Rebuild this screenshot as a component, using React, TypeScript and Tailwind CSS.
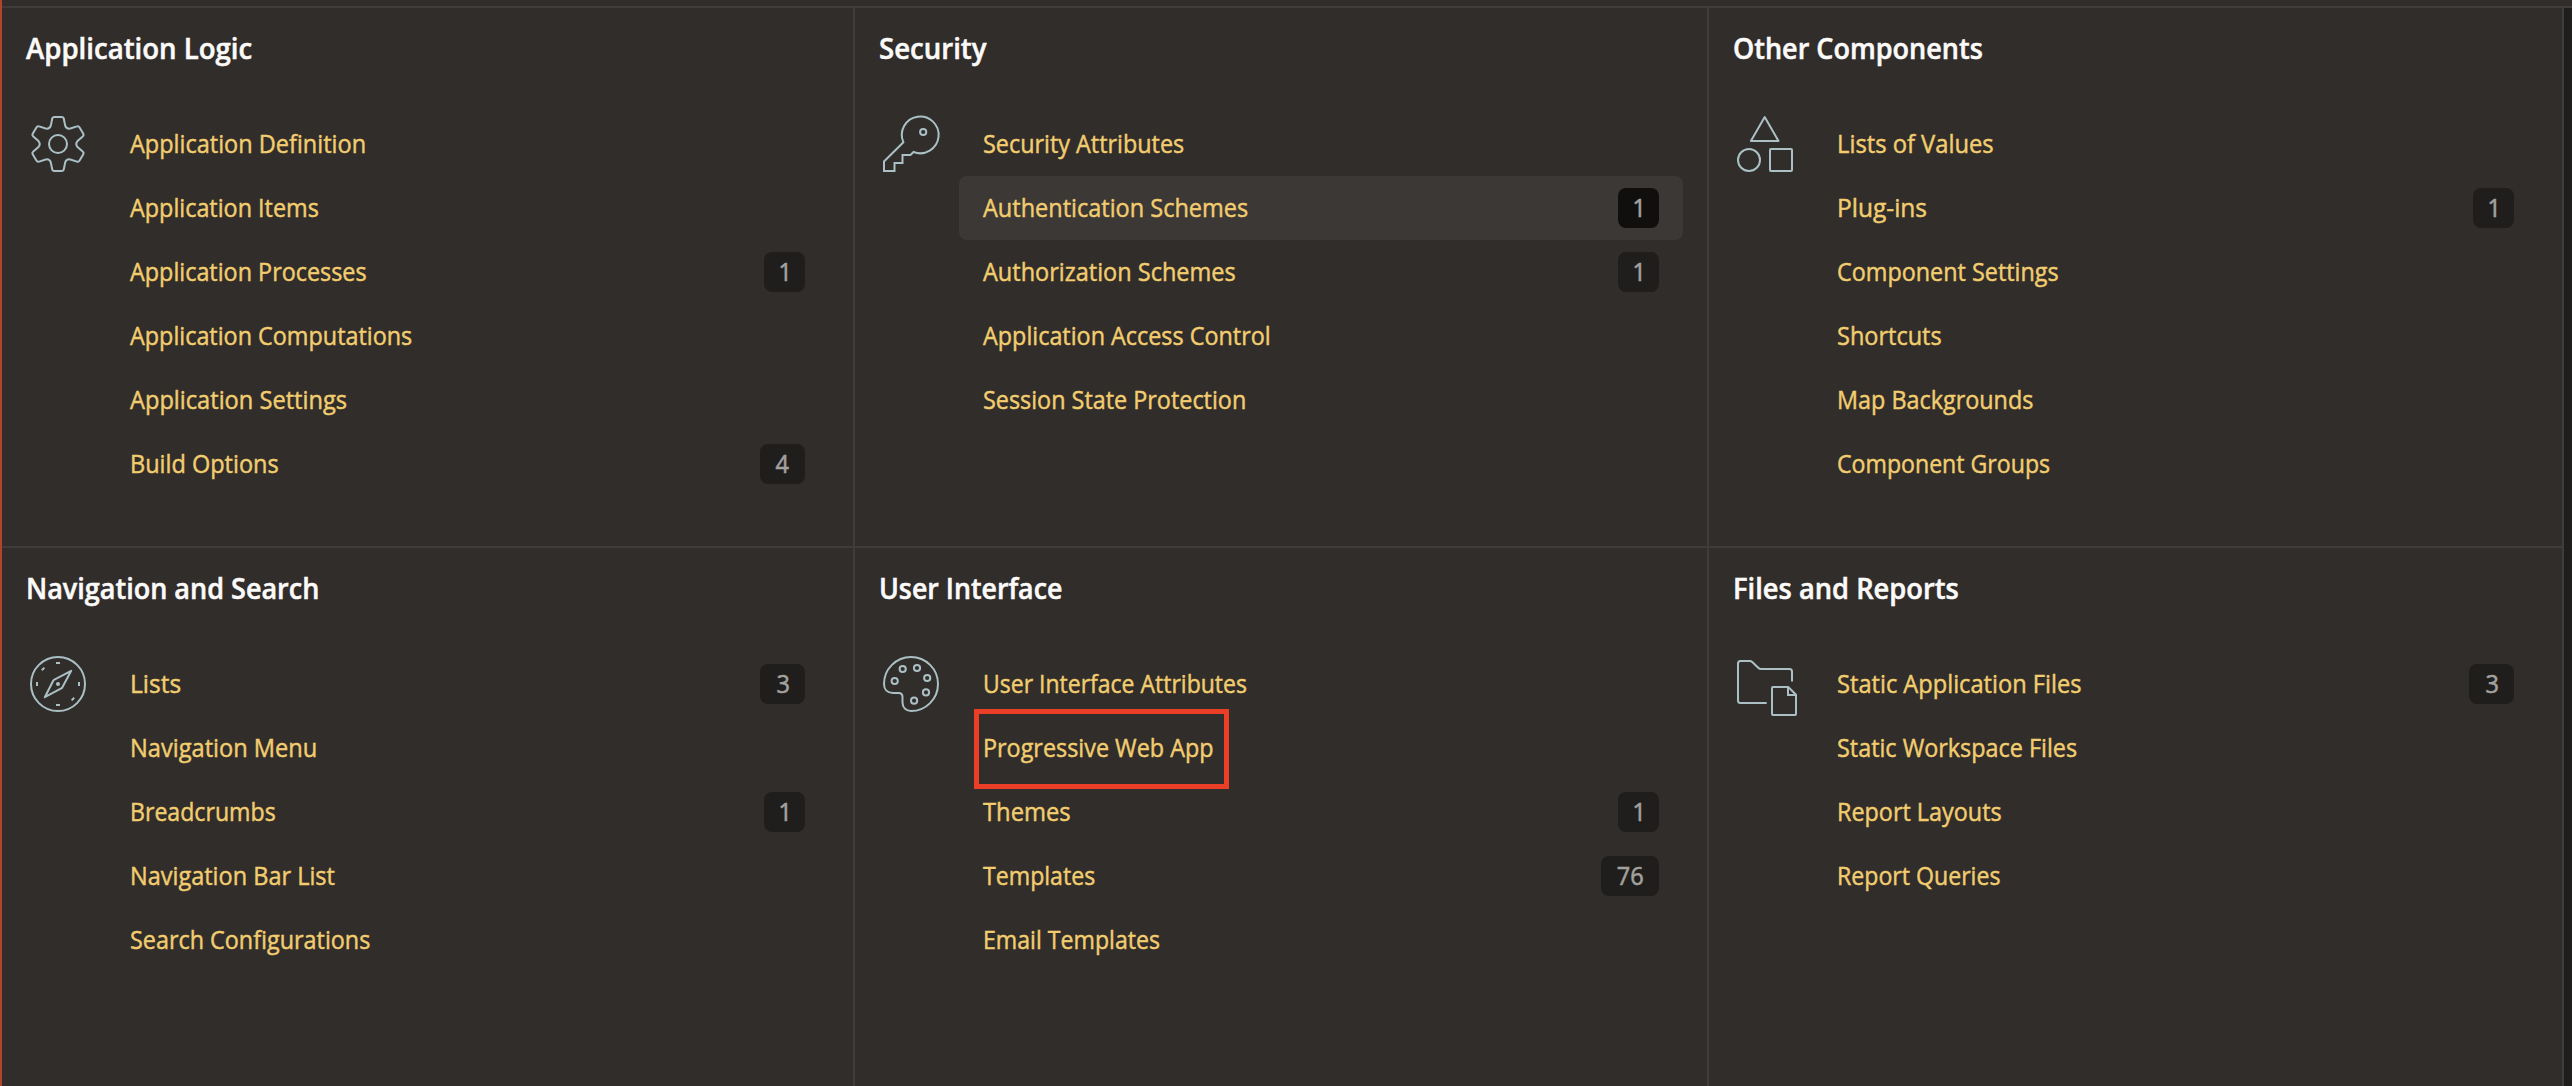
import React from 'react';

type Entry = { label: string; fit: string; count?: number; active?: boolean; marked?: boolean };
type Section = { title: string; fit: string; icon: React.ReactNode; entries: Entry[] };

// Outline of a six-toothed gear: one tooth, repeated every 60 degrees.
function gearPath() {
  const at = (k: number, x: number, y: number) => {
    const a = (k * Math.PI) / 3;
    const px = 32 + x * Math.cos(a) - y * Math.sin(a);
    const py = 32 + x * Math.sin(a) + y * Math.cos(a);
    return `${px.toFixed(2)} ${py.toFixed(2)}`;
  };
  let d = `M${at(0, -7.2, -18.4)}`;
  for (let k = 0; k < 6; k++) {
    d += `L${at(k, -5.8, -25.2)}Q${at(k, -5.5, -27)} ${at(k, -3.6, -27)}`;
    d += `L${at(k, 3.6, -27)}Q${at(k, 5.5, -27)} ${at(k, 5.8, -25.2)}`;
    d += `L${at(k, 7.2, -18.4)}Q${at(k, 8.5, -14.7)} ${at(k + 1, -7.2, -18.4)}`;
  }
  return d + 'Z';
}

function Icon({ children }: { children: React.ReactNode }) {
  return (
    <svg
      viewBox="0 0 64 64"
      className="size-16 shrink-0 overflow-visible text-[#aac0c4]"
      fill="none"
      stroke="currentColor"
      strokeWidth="2"
      aria-hidden="true"
    >
      {children}
    </svg>
  );
}

const gear = (
  <Icon>
    <path d={gearPath()} />
    <circle cx="32" cy="32" r="9" />
  </Icon>
);

const key = (
  <Icon>
    <path d="M24.4 30.3 5 49.5V59h10.5v-8h8v-8h8l3-3A18.4 18.4 0 1 0 24.4 30.3Z" />
    <circle cx="44.2" cy="20" r="3.1" />
  </Icon>
);

const shapes = (
  <Icon>
    <path d="M31.7 5 45.5 29H17.9Z" strokeLinejoin="round" />
    <circle cx="16" cy="48" r="11" />
    <rect x="37" y="37" width="22" height="22" rx="1" />
  </Icon>
);

const compass = (
  <Icon>
    <circle cx="32" cy="32" r="27" />
    <path d="M45.2 18.8 36.4 35.2Q36 36 35.2 36.4L18.8 45.2 27.2 28.8Q27.6 28 28.4 27.6Z" strokeLinejoin="round" />
    <circle cx="32" cy="32" r="2" fill="currentColor" stroke="none" />
    <path d="M30 11h4M30 53h4M11 30v4M53 30v4M15.8 18.2l2.6-2.6M45.6 48.4l2.6-2.6" />
  </Icon>
);

const palette = (
  <Icon>
    <path d="M32 5a27 27 0 0 1 0 54C27 59 23.5 55.5 23.5 50.5V45Q23.5 41 19.5 41H14C8.5 41 5 37.5 5 32A27 27 0 0 1 32 5Z" />
    <circle cx="15.7" cy="29" r="3.1" />
    <circle cx="23.7" cy="17" r="3.1" />
    <circle cx="38" cy="16" r="3.1" />
    <circle cx="48.2" cy="26" r="3.1" />
    <circle cx="47" cy="40.4" r="3.1" />
    <circle cx="35.1" cy="48.7" r="3.1" />
  </Icon>
);

const folder = (
  <Icon>
    <path d="M59 29.5V19.5Q59 17 56.5 17H28Q26.5 17 25.5 16L19.5 10.2Q18.3 9 16.5 9H7.5Q5 9 5 11.5V48.5Q5 51 7.5 51H33.7" />
    <path d="M39 36q0-1 1-1H55.3L63 42.7V62q0 1-1 1H40q-1 0-1-1Z" />
    <path d="M55 35v8h8" />
  </Icon>
);

// `fit` narrows each label horizontally.
const sections: Section[] = [
  {
    title: 'Application Logic',
    fit: 'scale-x-[0.985]',
    icon: gear,
    entries: [
      { label: 'Application Definition', fit: 'scale-x-[0.94]' },
      { label: 'Application Items', fit: 'scale-x-[0.935]' },
      { label: 'Application Processes', fit: 'scale-x-[0.935]', count: 1 },
      { label: 'Application Computations', fit: 'scale-x-[0.935]' },
      { label: 'Application Settings', fit: 'scale-x-[0.945]' },
      { label: 'Build Options', fit: 'scale-x-[0.94]', count: 4 },
    ],
  },
  {
    title: 'Security',
    fit: 'scale-x-[0.985]',
    icon: key,
    entries: [
      { label: 'Security Attributes', fit: 'scale-x-[0.935]' },
      { label: 'Authentication Schemes', fit: 'scale-x-[0.94]', count: 1, active: true },
      { label: 'Authorization Schemes', fit: 'scale-x-[0.94]', count: 1 },
      { label: 'Application Access Control', fit: 'scale-x-[0.935]' },
      { label: 'Session State Protection', fit: 'scale-x-[0.935]' },
    ],
  },
  {
    title: 'Other Components',
    fit: 'scale-x-[0.965]',
    icon: shapes,
    entries: [
      { label: 'Lists of Values', fit: 'scale-x-[0.95]' },
      { label: 'Plug-ins', fit: 'scale-x-[0.98]', count: 1 },
      { label: 'Component Settings', fit: 'scale-x-[0.935]' },
      { label: 'Shortcuts', fit: 'scale-x-[0.94]' },
      { label: 'Map Backgrounds', fit: 'scale-x-[0.935]' },
      { label: 'Component Groups', fit: 'scale-x-[0.925]' },
    ],
  },
  {
    title: 'Navigation and Search',
    fit: 'scale-x-[0.965]',
    icon: compass,
    entries: [
      { label: 'Lists', fit: 'scale-x-[0.98]', count: 3 },
      { label: 'Navigation Menu', fit: 'scale-x-[0.945]' },
      { label: 'Breadcrumbs', fit: 'scale-x-[0.925]', count: 1 },
      { label: 'Navigation Bar List', fit: 'scale-x-[0.94]' },
      { label: 'Search Configurations', fit: 'scale-x-[0.935]' },
    ],
  },
  {
    title: 'User Interface',
    fit: 'scale-x-[0.955]',
    icon: palette,
    entries: [
      { label: 'User Interface Attributes', fit: 'scale-x-[0.92]' },
      { label: 'Progressive Web App', fit: 'scale-x-[0.935]', marked: true },
      { label: 'Themes', fit: 'scale-x-[0.95]', count: 1 },
      { label: 'Templates', fit: 'scale-x-[0.925]', count: 76 },
      { label: 'Email Templates', fit: 'scale-x-[0.925]' },
    ],
  },
  {
    title: 'Files and Reports',
    fit: 'scale-x-[0.975]',
    icon: folder,
    entries: [
      { label: 'Static Application Files', fit: 'scale-x-[0.945]', count: 3 },
      { label: 'Static Workspace Files', fit: 'scale-x-[0.935]' },
      { label: 'Report Layouts', fit: 'scale-x-[0.935]' },
      { label: 'Report Queries', fit: 'scale-x-[0.925]' },
    ],
  },
];

const badgeWidths: Record<number, string> = {
  1: 'w-[40.6px]',
  3: 'w-[44.6px]',
  4: 'w-[45.4px]',
  76: 'w-[58px]',
};

function Row({ label, fit, count, active, marked }: Entry) {
  return (
    <li
      className={`relative flex h-16 items-center justify-between rounded-lg px-6 ${active ? 'bg-[#3c3835]' : ''}`}
    >
      <a
        href="#"
        className={`origin-left pb-0.5 text-[25px] leading-8 text-[#f1cd70] [-webkit-text-stroke:0.45px_currentColor] ${fit}`}
      >
        {label}
      </a>
      {count !== undefined && (
        <span
          className={`flex h-10 items-center justify-center rounded-lg pb-0.5 text-[25px] leading-8 text-[#a3a19e] [-webkit-text-stroke:0.6px_currentColor] ${badgeWidths[count]} ${active ? 'bg-[#100f0e]' : 'bg-[#201e1c]'}`}
        >
          <span className="scale-x-[0.94]">{count}</span>
        </span>
      )}
      {marked && (
        <span className="pointer-events-none absolute -top-[7px] left-[15px] h-20 w-[255px] border-5 border-[#eb3e26]" />
      )}
    </li>
  );
}

function Panel({ title, fit, icon, entries }: Section) {
  return (
    <section className="border-r-2 border-b-2 border-[#403c39] pr-6 pl-6">
      <div className="flex h-[104px] items-start pt-5">
        <h2
          className={`origin-left text-[28px] leading-10 font-semibold text-[#fcfbfa] [-webkit-text-stroke:0.5px_currentColor] ${fit}`}
        >
          {title}
        </h2>
      </div>
      <div className="flex gap-4">
        {icon}
        <ul className="flex-1">
          {entries.map((entry) => (
            <Row key={entry.label} {...entry} />
          ))}
        </ul>
      </div>
    </section>
  );
}

export default function App() {
  return (
    <div className="h-[1086px] w-[2572px] overflow-hidden border-l-2 border-[#b5432b] bg-[#312d2a] font-['Open_Sans',sans-serif]">
      <div className="h-2 border-b-2 border-[#403c39]" />
      <div className="flex h-[1080px] bg-[#201e1c]">
        <main className="grid h-full w-[2562px] grid-cols-[853px_854px_855px] grid-rows-[540px_540px] bg-[#312d2a]">
          {sections.map((section) => (
            <Panel key={section.title} {...section} />
          ))}
        </main>
      </div>
    </div>
  );
}
